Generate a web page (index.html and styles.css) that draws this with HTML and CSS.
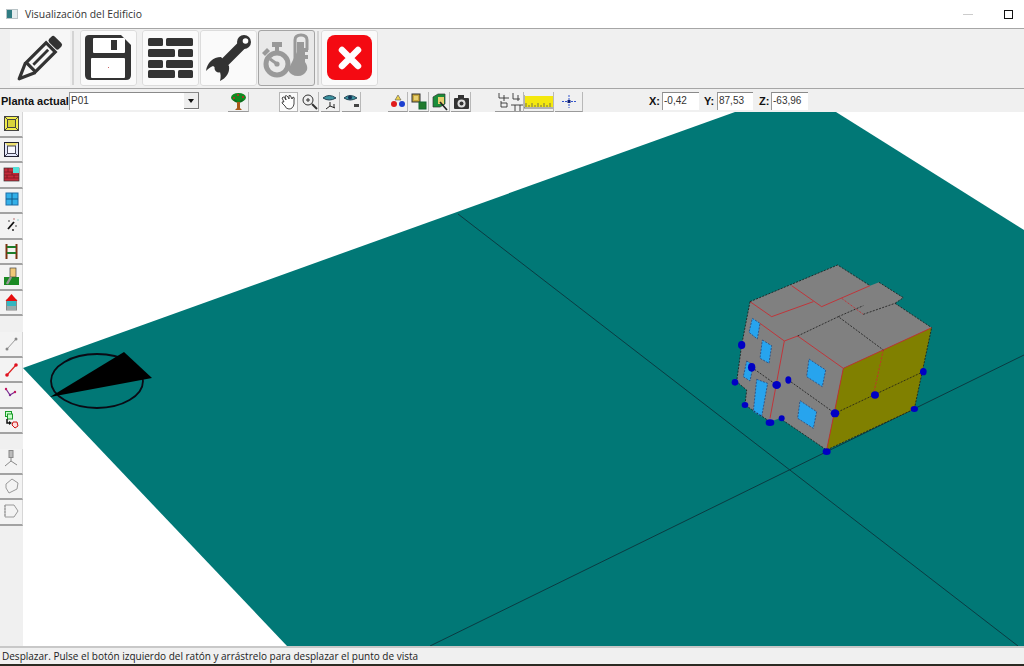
FILE: index.html
```html
<!DOCTYPE html>
<html lang="es">
<head>
<meta charset="utf-8">
<title>Visualización del Edificio</title>
<link rel="stylesheet" href="styles.css">
</head>
<body>
<div class="app">
  <header class="titlebar">
    <svg class="app-icon" width="12" height="10" viewBox="0 0 12 10"><rect width="12" height="10" fill="#b9c3c6"/><rect x="1" y="1" width="5" height="8" fill="#2f7c82"/><rect x="6" y="1" width="5" height="8" fill="#e4ecee"/></svg>
    <span class="title-text">Visualización del Edificio</span>
    <span class="win-min"></span>
    <span class="win-max"></span>
  </header>

  <nav class="bigbar">
    <div class="big-first">
      <svg width="60" height="56" viewBox="0 0 60 56"><g transform="translate(-3 1) rotate(45 32 28)" fill="none" stroke="#333"><rect x="25" y="1" width="14" height="8" rx="2.500" fill="#333" stroke="none"/><rect x="25.500" y="11.500" width="13" height="28" fill="none" stroke-width="3.200"/><path d="M32 15v21" stroke-width="2.800"/><path d="M25 40L32 56L39 40" stroke-width="3.200" stroke-linejoin="round"/></g></svg>
    </div>
    <span class="big-sep"></span>
    <button class="big"><svg width="57" height="56" viewBox="0 0 57 56"><path d="M9 5H41L51 15V45Q51 50 46 50H10Q5 50 5 45V9Q5 5 9 5Z" fill="#333"/><rect x="13" y="8" width="32" height="15" rx="1" fill="#fff"/><rect x="31" y="10" width="6" height="10" fill="#333"/><rect x="11" y="28" width="34" height="20" rx="1" fill="#fff"/><rect x="28" y="37" width="1" height="1" fill="#c66"/></svg></button>
    <button class="big big-gap"><svg width="57" height="56" viewBox="0 0 57 56" fill="#333"><rect x="6" y="8" width="15" height="8" rx="1.500"/><rect x="24" y="8" width="27" height="8" rx="1.500"/><rect x="6" y="19" width="27" height="8" rx="1.500"/><rect x="36" y="19" width="15" height="8" rx="1.500"/><rect x="6" y="30" width="15" height="8" rx="1.500"/><rect x="24" y="30" width="27" height="8" rx="1.500"/><rect x="6" y="40" width="27" height="8" rx="1.500"/><rect x="36" y="40" width="15" height="8" rx="1.500"/></svg></button>
    <button class="big big-near"><svg width="57" height="56" viewBox="0 0 57 56"><path d="M43 14L19 38" stroke="#333" stroke-width="9" stroke-linecap="round"/><circle cx="44" cy="12" r="7" fill="#333"/><path d="M6 41C7 33 13 27 21 27L29 36C30 43 26 48 20 51C21 47 21 43 19 40L13 36C10 37 8 39 6 41Z" fill="#333"/><circle cx="45.500" cy="11" r="2.800" fill="#fff"/></svg></button>
    <button class="big big-near big-on"><svg width="57" height="56" viewBox="0 0 57 56"><path d="M37 30V10Q37 5 43 5Q49 5 49 10V20" fill="none" stroke="#999" stroke-width="3"/><path d="M30 40L39 22V12H46V18H50V22H47V25H50V29H47V32Q50 36 49 40Q46 46 40 46Q33 46 30 40Z" fill="#999"/><circle cx="19" cy="34" r="11" fill="#e9e9e9" stroke="#999" stroke-width="5"/><rect x="14" y="12" width="10" height="5" fill="#999"/><rect x="17" y="16" width="4" height="6" fill="#999"/><path d="M4 23L9 18L12 21L7 26Z" fill="#999"/><path d="M19 34L12 29" stroke="#999" stroke-width="3"/><circle cx="19" cy="34" r="2.600" fill="#999"/></svg></button>
    <span class="big-sep big-sep2"></span>
    <button class="big big-last"><svg width="57" height="56" viewBox="0 0 57 56"><rect x="6" y="5" width="45" height="45" rx="8" fill="#f40a12"/><path d="M21 20L37 36M37 20L21 36" stroke="#fff" stroke-width="6.500" stroke-linecap="round"/></svg></button>
  </nav>

  <nav class="smallbar">
    <label class="planta">Planta actual</label>
    <div class="select"><span class="select-val">P01</span><span class="select-arrow"></span></div>
    <button class="sm sm-tree"><svg width="21" height="19" viewBox="0 0 21 19"><path d="M9 9H12V16L14 18H7L9 16Z" fill="#a8591a"/><ellipse cx="10.500" cy="5.500" rx="7.500" ry="4.500" fill="#0f8a1e"/><path d="M6 8L9 10M15 8L12 10" stroke="#0f6a1e" stroke-width="2"/><circle cx="6" cy="6" r="1" fill="#c22"/><circle cx="15" cy="5" r="1" fill="#c22"/><circle cx="10" cy="3" r="1" fill="#c22"/></svg></button>
    <div class="grp grp-view">
      <button class="sm sm-on"><svg width="19" height="19" viewBox="0 0 19 19" fill="#fff" stroke="#333" stroke-width=".9"><path d="M5 10L3 6Q4 4 6 6L7 8L6 4Q8 3 9 5L10 7L10 3.500Q12 3 12 5L13 7L14 5Q16 5 15 8L15 12Q14 17 10 17Q7 17 6 14L3 11Q3 9 5 10Z"/></svg></button>
      <button class="sm"><svg width="19" height="19" viewBox="0 0 19 19" fill="none" stroke="#333"><circle cx="8" cy="8" r="5" stroke-width="1"/><path d="M6 8H10M8 6V10" stroke-width="1"/><path d="M12 12L17 17" stroke-width="2"/></svg></button>
      <button class="sm"><svg width="19" height="19" viewBox="0 0 19 19"><path d="M2 6Q8 1 15 6Q8 10 2 6Z" fill="#3c93a0" stroke="#245"/><path d="M9 10V14L5 17M9 14L14 16M13 12V16" stroke="#222" fill="none"/></svg></button>
      <button class="sm"><svg width="19" height="19" viewBox="0 0 19 19"><path d="M2 6Q8 1 15 6Q8 10 2 6Z" fill="#3c93a0" stroke="#245"/><circle cx="8" cy="5.500" r="2" fill="#135"/><rect x="12" y="12" width="5" height="3" fill="#444"/></svg></button>
    </div>
    <div class="grp grp-render">
      <button class="sm sm20"><svg width="20" height="19" viewBox="0 0 20 19"><path d="M10 3L13 8H7Z" fill="#eed24a" stroke="#555" stroke-width=".6"/><circle cx="6" cy="12" r="3" fill="#e01b1b"/><circle cx="14" cy="12" r="3" fill="#1b3fd0"/></svg></button>
      <button class="sm sm20"><svg width="20" height="19" viewBox="0 0 20 19"><rect x="3" y="2" width="8" height="8" fill="#c8a83a" stroke="#333"/><rect x="5" y="4" width="4" height="4" fill="#e8d070"/><rect x="10" y="10" width="7" height="7" fill="#1f7a2c" stroke="#163"/></svg></button>
      <button class="sm sm20"><svg width="20" height="19" viewBox="0 0 20 19"><path d="M3 5L8 2H15V12L10 15H3Z" fill="#1b8d3a" stroke="#333" stroke-width=".7"/><rect x="8" y="5" width="6" height="7" fill="#e8d070"/><path d="M10 10L17 18" stroke="#222" stroke-width="1.600"/></svg></button>
      <button class="sm sm20"><svg width="20" height="19" viewBox="0 0 20 19"><rect x="3" y="6" width="15" height="11" rx="1" fill="#333"/><rect x="7" y="3" width="6" height="4" fill="#333"/><circle cx="10.500" cy="11.500" r="4" fill="#ddd"/><circle cx="10.500" cy="11.500" r="2" fill="#333"/></svg></button>
    </div>
    <div class="grp grp-measure">
      <button class="sm sm29"><svg width="29" height="19" viewBox="0 0 29 19" fill="none" stroke="#333" stroke-width=".9"><path d="M4 1V6H14M9 3V9M18 1V7H25M23 3V9M6 9V15H12V11H6M16 13H28M20 13V19M25 13V19"/></svg></button>
      <button class="sm sm30"><svg width="30" height="19" viewBox="0 0 30 19"><rect x="1" y="4" width="28" height="11" fill="#f4e80e"/><path d="M2 15V11M5 15V13M8 15V11M11 15V13M14 15V11M17 15V13M20 15V11M23 15V13M26 15V11M0 3V16H30" stroke="#555" stroke-width=".8" fill="none"/></svg></button>
      <button class="sm sm28"><svg width="28" height="19" viewBox="0 0 28 19"><path d="M7 9.500H21M14 3V16" stroke="#35c" stroke-width="1" stroke-dasharray="2 1"/><rect x="12.500" y="8" width="3" height="3" fill="#127"/></svg></button>
    </div>
    <div class="coords">
      <span class="c-lab">X:</span><span class="c-val">-0,42</span>
      <span class="c-lab c-y">Y:</span><span class="c-val c-val-y">87,53</span>
      <span class="c-lab c-z">Z:</span><span class="c-val">-63,96</span>
    </div>
  </nav>

  <main class="work">
    <aside class="side">
      <div class="side-grp">
        <button class="tb"><svg width="23" height="25" viewBox="0 0 23 25"><rect x="4.500" y="5.500" width="14" height="14" fill="#f2ee4c" stroke="#444"/><rect x="7.500" y="8.500" width="8" height="8" fill="#d8d43c" stroke="#444"/><path d="M5 6L8 9M18 6L15 9M5 19L8 16M18 19L15 16" stroke="#444"/></svg></button>
        <button class="tb"><svg width="23" height="25" viewBox="0 0 23 25"><rect x="4.500" y="5.500" width="14" height="14" fill="#e4e8fb" stroke="#223"/><path d="M5 6H18L15 9H8Z" fill="#eee070"/><rect x="7.500" y="9" width="8" height="7.500" fill="#f8f8ff" stroke="#445"/><path d="M5 19L8 16M18 19L15 16" stroke="#445"/></svg></button>
        <button class="tb"><svg width="23" height="25" viewBox="0 0 23 25"><rect x="4" y="6" width="15" height="13" fill="#c62b3a" stroke="#333" stroke-width=".7"/><path d="M4 10H13M4 13H19M4 16H19M8 6V10M12 10V13M7 13V16M14 13V16" stroke="#7a1a22" stroke-width=".8"/><rect x="13" y="5" width="6" height="6" fill="#55e0d8"/></svg></button>
        <button class="tb"><svg width="23" height="25" viewBox="0 0 23 25"><rect x="6" y="5" width="12" height="12" fill="#33b0e8" stroke="#1f6fa8"/><path d="M12 5V17M6 11H18" stroke="#145a88"/></svg></button>
        <button class="tb"><svg width="23" height="25" viewBox="0 0 23 25"><path d="M8 16L14 9" stroke="#111" stroke-width="1.800"/><circle cx="9" cy="8" r=".8" fill="#333"/><circle cx="18" cy="7" r=".8" fill="#8cc"/><circle cx="16" cy="13" r=".8" fill="#333"/><circle cx="13" cy="17" r=".9" fill="#111"/><circle cx="14" cy="6" r=".7" fill="#a44"/></svg></button>
        <button class="tb"><svg width="23" height="25" viewBox="0 0 23 25"><path d="M6.500 5V20M16.500 5V20" stroke="#7a3410" stroke-width="2"/><path d="M7 8H16M7 14H16" stroke="#1d7d2a" stroke-width="2"/></svg></button>
        <button class="tb"><svg width="23" height="25" viewBox="0 0 23 25"><rect x="4" y="13" width="15" height="8" fill="#1a8a22"/><rect x="10" y="4" width="6" height="9" fill="#f0c878" stroke="#444" stroke-width=".7"/><path d="M11 13L7 20" stroke="#999" stroke-width="2.500"/></svg></button>
        <button class="tb"><svg width="23" height="25" viewBox="0 0 23 25"><rect x="6.500" y="10" width="10" height="10" fill="#34b6c0" stroke="#888"/><rect x="7" y="16" width="9" height="4" fill="#9aa"/><path d="M5.500 11L11.500 4L17.500 11Z" fill="#e60d0d"/></svg></button>
      </div>
      <div class="side-grp side-grp2">
        <button class="tb"><svg width="23" height="25" viewBox="0 0 23 25"><path d="M7 18L16 8" stroke="#999" stroke-width="1"/><circle cx="7" cy="18" r="1.500" fill="#888"/><circle cx="16" cy="8" r="1.500" fill="#888"/></svg></button>
        <button class="tb"><svg width="23" height="25" viewBox="0 0 23 25"><path d="M7 18L16 8" stroke="#d22" stroke-width="1.200"/><circle cx="7" cy="18" r="1.800" fill="#e01020"/><circle cx="16" cy="8" r="1.800" fill="#e01020"/></svg></button>
        <button class="tb"><svg width="23" height="25" viewBox="0 0 23 25"><path d="M6 7L10 13L15 10" fill="none" stroke="#7a2a90" stroke-width="1.200"/><circle cx="6" cy="7" r="1.200" fill="#c21860"/><circle cx="10" cy="13" r="1.200" fill="#7a2a90"/><circle cx="15" cy="10" r="1.200" fill="#c21860"/></svg></button>
        <button class="tb"><svg width="23" height="25" viewBox="0 0 23 25"><rect x="5.500" y="3.500" width="6" height="5" fill="#cfc" stroke="#1a9a2a"/><rect x="7.500" y="6" width="5" height="5" fill="#cfc" stroke="#1a9a2a"/><path d="M7 11V15H10" fill="none" stroke="#111" stroke-width="1.500"/><path d="M9 13L12 15L9 17Z" fill="#111"/><path d="M13 14H17L18 18L15 20L12 17Z" fill="#fdd" stroke="#c11"/></svg></button>
      </div>
      <div class="side-grp side-grp3">
        <button class="tb"><svg width="23" height="25" viewBox="0 0 23 25" fill="none" stroke="#888"><rect x="9" y="2.500" width="4" height="7" fill="#bbb"/><path d="M11 10V13L5 18M11 13L17 17"/></svg></button>
        <button class="tb"><svg width="23" height="25" viewBox="0 0 23 25" fill="none" stroke="#999"><path d="M6 10L12 5L18 9L17 15L9 19L6 14Z"/></svg></button>
        <button class="tb"><svg width="23" height="25" viewBox="0 0 23 25" fill="none" stroke="#999"><path d="M5 6H14L18 12L14 18H5Z"/><path d="M5 6V18" stroke-dasharray="2 1"/></svg></button>
      </div>
    </aside>
    <div class="view">
      <svg class="scene" width="1001" height="534" viewBox="23 112 1001 534">
        <polygon points="23,368 735,112 836,112 1024,230 1024,646 287,646" fill="#017876"/>
        <path d="M458 214L1018 646M430 646L1024 355" stroke="#0b3b42" stroke-width="1" fill="none"/>
        <ellipse cx="97" cy="381" rx="46" ry="27" fill="none" stroke="#0a0a14" stroke-width="1.800"/>
        <polygon points="50,397 124,352 152,378" fill="#000"/>
        <g transform="translate(725 255) scale(.3333)">
          <path d="M75 140L338 30L435 92L462 82L535 128L510 145L620 218L355 340L305 585L165 490L135 500L60 450L65 405L35 380L50 270Z" fill="#808080"/>
          <path d="M355 340L620 218L568 462L305 585Z" fill="#808000"/>
          <g fill="#27a4ee" stroke="#203a70" stroke-width="2" stroke-dasharray="6 4">
            <path d="M82 190L105 205L97 252L72 232Z"/>
            <path d="M112 255L140 272L132 325L105 310Z"/>
            <path d="M252 312L302 345L292 395L245 365Z"/>
            <path d="M225 437L275 470L265 520L218 490Z"/>
            <path d="M65 318L85 330L75 378L55 365Z"/>
            <path d="M95 373L128 385L110 485L85 470Z"/>
          </g>
          <g fill="none" stroke="#c92a30" stroke-width="2.600">
            <path d="M75 140L140 185M200 92L290 155M140 185L265 140M290 155L435 92M105 205L178 258L135 490M178 258L218 243L355 340L620 218M355 340L305 585"/>
            <path d="M350 130L415 178M475 285L445 420" stroke-dasharray="7 4" stroke-width="2.500"/>
          </g>
          <g fill="none" stroke="#1a1a1a" stroke-width="2.400" stroke-dasharray="6 4">
            <path d="M218 243L340 185L475 285M340 185L415 152M415 178L510 145M75 140L338 30L435 92M462 82L535 128L510 145M510 145L620 218M75 140L50 270L35 380L65 405L60 450L135 500M165 490L305 585L568 462L620 218M80 337L155 390M190 375L330 475L595 350"/>
          </g>
          <g fill="#0000c4">
            <ellipse cx="50" cy="270" rx="11" ry="12"/>
            <ellipse cx="80" cy="337" rx="11" ry="13"/>
            <ellipse cx="30" cy="382" rx="10" ry="10"/>
            <ellipse cx="155" cy="390" rx="13" ry="12"/>
            <ellipse cx="190" cy="375" rx="9" ry="11"/>
            <ellipse cx="330" cy="475" rx="13" ry="12"/>
            <ellipse cx="595" cy="350" rx="10" ry="11"/>
            <ellipse cx="450" cy="420" rx="12" ry="11"/>
            <ellipse cx="568" cy="462" rx="11" ry="9"/>
            <ellipse cx="60" cy="450" rx="10" ry="9"/>
            <ellipse cx="135" cy="503" rx="13" ry="10"/>
            <ellipse cx="170" cy="490" rx="9" ry="9"/>
            <ellipse cx="305" cy="590" rx="12" ry="10"/>
          </g>
        </g>
      </svg>
    </div>
  </main>

  <footer class="status">Desplazar. Pulse el botón izquierdo del ratón y arrástrelo para desplazar el punto de vista</footer>
</div>
</body>
</html>
```

FILE: styles.css
```css
html, body {
  margin: 0;
  padding: 0;
  background: #f0f0f0;
  overflow: hidden;
}
.app {
  width: 1024px;
  height: 666px;
  display: flex;
  flex-direction: column;
  font-family: "Liberation Sans", Arial, sans-serif;
  color: #111;
}
button {
  padding: 0;
  margin: 0;
  background: none;
  border: 0;
  display: block;
}
svg { display: block; }

.titlebar {
  height: 28px;
  flex: none;
  background: #fff;
  border-bottom: 1px solid #a6a6a6;
  display: flex;
  align-items: center;
  padding-left: 6px;
  box-sizing: content-box;
}
.title-text {
  margin-left: 7px;
  font: 10.4px "Open Sans", sans-serif;
  color: #333;
  white-space: nowrap;
}
.win-min {
  margin-left: auto;
  width: 10px;
  height: 1px;
  background: #ccc;
}
.win-max {
  margin-left: 31px;
  margin-right: 11px;
  width: 7px;
  height: 7px;
  border: 1px solid #111;
}

.bigbar {
  height: 60px;
  flex: none;
  box-sizing: border-box;
  background: #f0f0f0;
  border-bottom: 1px solid #a6a6a6;
  display: flex;
  align-items: flex-start;
  padding: 1px 0 0 10px;
}
.big-first {
  width: 60px;
  height: 56px;
  background: #f7f7f7;
}
.big-sep {
  width: 2px;
  height: 54px;
  margin: 1px 0 0 2px;
  background: #d4d4d4;
  flex: none;
}
.big {
  width: 57px;
  height: 56px;
  box-sizing: border-box;
  background: #fafafa;
  border-radius: 3px;
  outline: 1px solid #dcdcdc;
  outline-offset: -1px;
  margin-left: 6px;
}
.big-gap { margin-left: 5px; }
.big-near { margin-left: 1px; }
.big-on {
  background: #e9e9e9;
  outline-color: #a5a5a5;
}
.big-sep2 { margin-left: 2px; }
.big-last { margin-left: 2px; }

.smallbar {
  height: 23px;
  flex: none;
  background: #f0f0f0;
  display: flex;
  align-items: flex-start;
  padding-top: 3px;
  box-sizing: border-box;
}
.planta {
  width: 68px;
  margin-left: 1px;
  font-size: 11px;
  font-weight: bold;
  line-height: 18px;
  white-space: nowrap;
  color: #111;
}
.select {
  width: 130px;
  height: 18px;
  box-sizing: border-box;
  background: #fff;
  border-top: 1px solid #8a8a8a;
  border-left: 1px solid #9a9a9a;
  display: flex;
  justify-content: space-between;
  font-size: 10px;
  line-height: 16px;
  padding-left: 1px;
}
.select-val { color: #333; }
.select-arrow {
  width: 14px;
  height: 15px;
  background: #eee;
  border-right: 1px solid #777;
  border-bottom: 1px solid #777;
  position: relative;
}
.select-arrow::after {
  content: "";
  position: absolute;
  left: 4px;
  top: 6px;
  border-left: 3px solid transparent;
  border-right: 3px solid transparent;
  border-top: 4px solid #111;
}
.sm {
  width: 19px;
  height: 20px;
  box-sizing: border-box;
  border-bottom: 1px solid #9a9a9a;
  border-right: 1px solid #b8b8b8;
  overflow: hidden;
}
.sm-tree { width: 21px; margin-left: 29px; }
.sm-on { background: #fafafa; outline: 1px solid #b5b5b5; outline-offset: -1px; }
.sm20 { width: 20px; }
.sm29 { width: 29px; }
.sm30 { width: 30px; }
.sm28 { width: 28px; margin-left: 1px; }
.grp { display: flex; }
.grp-view { margin-left: 30px; gap: 2px; }
.grp-render { margin-left: 27px; gap: 1px; }
.grp-measure { margin-left: 24px; }
.coords {
  margin-left: 66px;
  display: flex;
  font-size: 11px;
  line-height: 18px;
}
.c-lab {
  width: 13px;
  font-weight: bold;
}
.c-y { margin-left: 5px; }
.c-z { margin-left: 6px; width: 12px; }
.c-val {
  width: 37px;
  height: 18px;
  box-sizing: border-box;
  background: #fff;
  border-top: 1px solid #8a8a8a;
  border-left: 1px solid #9a9a9a;
  font-size: 10px;
  line-height: 16px;
  padding-left: 1px;
  color: #333;
}
.c-val-y { width: 36px; }

.work {
  flex: none;
  height: 534px;
  display: flex;
  background: #fff;
}
.side {
  width: 23px;
  flex: none;
  background: #f0f0f0;
}
.side-grp2 { margin-top: 16px; }
.side-grp3 { margin-top: 15px; }
.tb {
  width: 23px;
  height: 25.5px;
  box-sizing: border-box;
  background: #f3f3f3;
  border-bottom: 2px solid #a2a2a2;
  border-right: 1px solid #d6d6d6;
  overflow: hidden;
}
.tb svg { margin-top: -1px; }
.view { flex: 1; }

.status {
  height: 20px;
  flex: none;
  box-sizing: border-box;
  background: #f0f0f0;
  border-top: 2px solid #c8c8c8;
  border-bottom: 2px solid #2a2a22;
  padding-left: 2px;
  font: 10px/16px "Open Sans", sans-serif;
  color: #222;
  white-space: nowrap;
}
```
